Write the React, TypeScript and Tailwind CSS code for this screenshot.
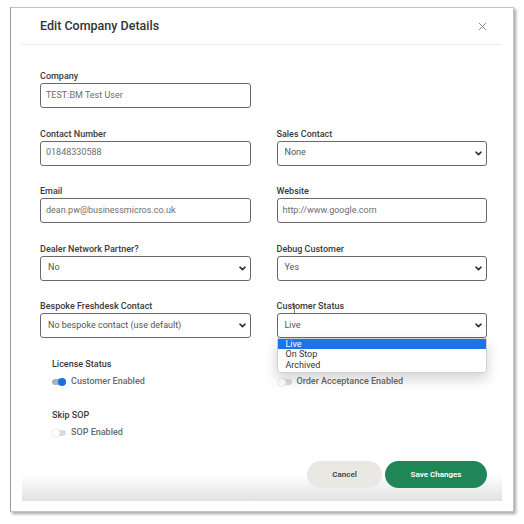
import React from "react";

const font = { fontFamily: "Roboto, 'Noto Sans', Arial, sans-serif" };

function Chevron() {
  return (
    <svg width="7" height="5" viewBox="0 0 7 5" className="shrink-0">
      <path d="M1 1.2 L3.5 3.6 L6 1.2" fill="none" stroke="#333" strokeWidth="1.6" strokeLinecap="round" strokeLinejoin="round" />
    </svg>
  );
}

function Field({
  label,
  value,
  select,
  children,
}: {
  label: string;
  value: string;
  select?: boolean;
  children?: React.ReactNode;
}) {
  return (
    <div className="relative flex flex-col">
      <span className="h-[12px] text-[9px] leading-[12px] font-medium text-[#3a3a3a]">{label}</span>
      <div
        className={`mt-[1px] flex h-[25px] items-center justify-between rounded-[3px] border border-[#6a6a6a] bg-white ${
          select ? "pl-[7px] pr-[4px]" : "px-[5px]"
        }`}
      >
        <span className={`text-[9px] ${select ? "text-[#555]" : "text-[#6e6e6e]"}`}>{value}</span>
        {select && <Chevron />}
      </div>
      {children}
    </div>
  );
}

function Toggle({ on, text }: { on?: boolean; text: string }) {
  return (
    <div className="flex h-[12px] items-center gap-[5px]">
      <div className="relative h-[8px] w-[14px]">
        <div
          className={`absolute inset-x-0 top-[1px] h-[6px] rounded-full ${on ? "bg-[#a9b0bd]" : "bg-[#dcdcdc]"}`}
        />
        <div
          className={`absolute top-0 h-[8px] w-[8px] rounded-full ${
            on ? "right-0 bg-[#1a6fe6]" : "left-0 bg-white shadow-[0_0_1px_rgba(0,0,0,0.35)]"
          }`}
        />
      </div>
      <span className="text-[9px] font-medium text-[#6a6a6a]">{text}</span>
    </div>
  );
}

export default function App() {
  return (
    <div className="h-[524px] w-[524px] overflow-hidden bg-white pl-[10px] pt-[7px]" style={font}>
      <div className="flex h-[505px] w-[504px] flex-col border border-[#c4c4c4] border-l-[#9a9a9a] bg-white px-[11px] shadow-[2px_2px_3px_rgba(0,0,0,0.35)]">
        {/* header */}
        <div className="flex h-[37px] shrink-0 items-center justify-between border-b border-[#ececec] pl-[18px] pr-[15px]">
          <h2 className="text-[12.5px] font-medium text-[#333]">Edit Company Details</h2>
          <svg width="9" height="9" viewBox="0 0 9 9">
            <path d="M1 1 L8 8 M8 1 L1 8" stroke="#8a8a8a" strokeWidth="1" />
          </svg>
        </div>

        {/* body */}
        <div className="pl-[18px] pr-[15px] pt-[25px]">
          <div className="grid grid-cols-2 gap-x-[26px] gap-y-[19.5px]">
            <Field label="Company" value="TEST:BM Test User" />
            <div />
            <Field label="Contact Number" value="01848330588" />
            <Field label="Sales Contact" value="None" select />
            <Field label="Email" value="dean.pw@businessmicros.co.uk" />
            <Field label="Website" value="http://www.google.com" />
            <Field label="Dealer Network Partner?" value="No" select />
            <Field label="Debug Customer" value="Yes" select />
            <Field label="Bespoke Freshdesk Contact" value="No bespoke contact (use default)" select />
            <Field label="Customer Status" value="Live" select>
              <svg width="5" height="9" viewBox="0 0 5 9" className="absolute left-[15px] top-[5px]">
                <path d="M0.5 0.5 H4.5 M2.5 0.5 V8.5 M0.5 8.5 H4.5" stroke="#666" strokeWidth="0.8" fill="none" />
              </svg>
              <div className="absolute left-0 right-0 top-[38px] z-10 rounded-b-[3px] border border-[#d0d0d0] bg-white pb-[1px] shadow-[0_6px_14px_rgba(0,0,0,0.18)]">
                <div className="h-[10px] bg-[#1c73ea] pl-[8px] text-[9px] leading-[10px] text-white">Live</div>
                <div className="h-[11px] pl-[8px] text-[9px] leading-[11px] text-[#333]">On Stop</div>
                <div className="h-[11px] pl-[8px] text-[9px] leading-[11px] text-[#333]">Archived</div>
              </div>
            </Field>
          </div>

          <div className="mt-[20px] grid grid-cols-2 gap-x-[26px]">
            <div className="flex flex-col pl-[12px]">
              <span className="h-[12px] text-[9px] leading-[12px] font-medium text-[#3a3a3a]">License Status</span>
              <div className="mt-[6px]">
                <Toggle on text="Customer Enabled" />
              </div>
              <span className="mt-[21px] h-[12px] text-[9px] leading-[12px] font-medium text-[#3a3a3a]">Skip SOP</span>
              <div className="mt-[6px]">
                <Toggle text="SOP Enabled" />
              </div>
            </div>
            <div className="flex flex-col pl-[1px] pt-[18px]">
              <Toggle text="Order Acceptance Enabled" />
            </div>
          </div>
        </div>

        {/* footer */}
        <div className="mb-[10px] mt-auto flex h-[45px] shrink-0 items-start justify-end gap-[3px] bg-linear-to-b from-white from-[40%] to-[#e2e2e2] pr-[15px] pt-[5px]">
          <button className="h-[27px] w-[75px] rounded-full bg-[#e9e8e3] text-[8px] font-semibold text-[#444]">
            Cancel
          </button>
          <button className="h-[27px] w-[102px] rounded-full bg-[#1f8757] text-[8px] font-semibold text-white">
            Save Changes
          </button>
        </div>
      </div>
    </div>
  );
}
